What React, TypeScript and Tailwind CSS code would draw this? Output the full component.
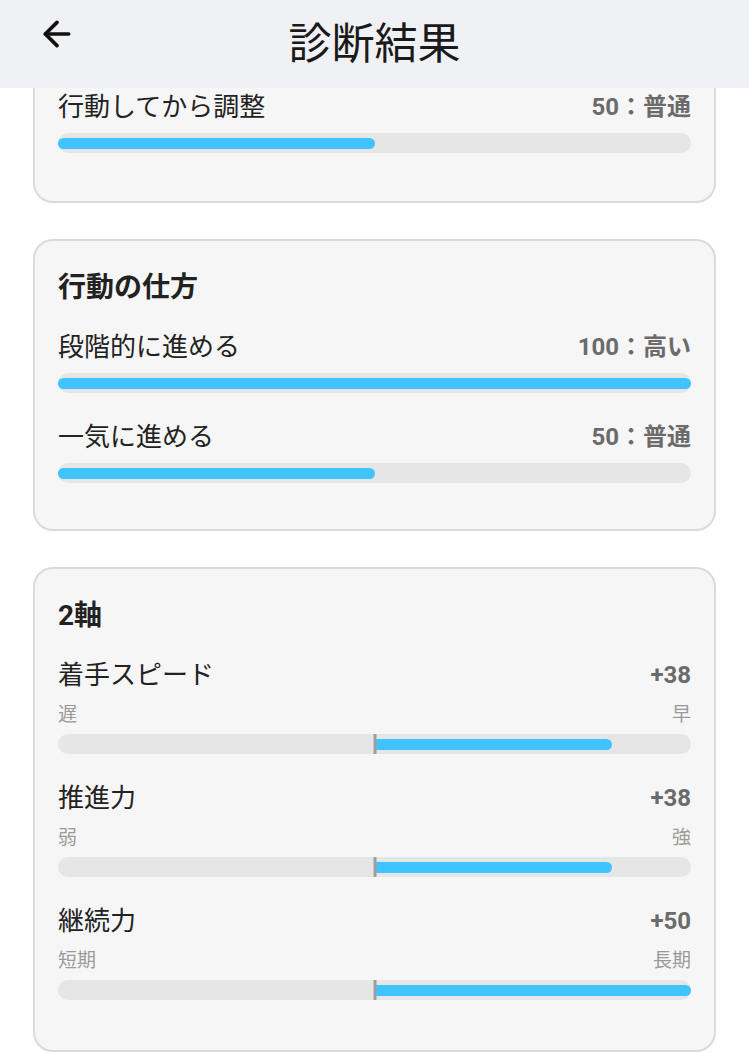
import { ArrowLeft } from "lucide-react";

type Level = { label: string; score: number; verdict: string };
type Axis = { label: string; value: number; fill: number; low: string; high: string };

const FONT = "font-['Roboto','Noto_Sans_CJK_JP',sans-serif]";

function LevelRow({ item }: { item: Level }) {
  return (
    <div>
      <div className="flex h-9 items-center justify-between">
        <span className="text-[26px] text-[#222]">{item.label}</span>
        <span className="text-[24px] font-bold text-[#6b6b6b]">
          {item.score}：{item.verdict}
        </span>
      </div>
      <div className="mt-2 flex h-5 items-center rounded-full bg-[#e6e6e6]">
        <div
          className="h-[11px] rounded-full bg-[#40c4ff]"
          style={{ width: `${item.score === 100 ? 100 : 50}%` }}
        />
      </div>
    </div>
  );
}

function AxisRow({ item }: { item: Axis }) {
  // fill is the share of the right half, 0..1
  return (
    <div>
      <div className="flex h-9 items-center justify-between">
        <span className="text-[26px] text-[#222]">{item.label}</span>
        <span className="text-[24px] font-bold text-[#6b6b6b]">
          {item.value > 0 ? `+${item.value}` : item.value}
        </span>
      </div>
      <div className="mt-2 flex h-7 items-center justify-between text-[19px] text-[#9a9a9a]">
        <span>{item.low}</span>
        <span>{item.high}</span>
      </div>
      <div className="relative mt-[5px] flex h-5 items-center rounded-full bg-[#e6e6e6]">
        <div
          className="absolute left-1/2 h-[11px] rounded-r-full bg-[#40c4ff]"
          style={{ width: `${item.fill * 50}%` }}
        />
        <div className="absolute left-1/2 top-0 h-5 w-[3px] -translate-x-1/2 bg-[#9e9e9e]" />
      </div>
    </div>
  );
}

const method: Level[] = [
  { label: "段階的に進める", score: 100, verdict: "高い" },
  { label: "一気に進める", score: 50, verdict: "普通" },
];

const axes: Axis[] = [
  { label: "着手スピード", value: 38, fill: 0.75, low: "遅", high: "早" },
  { label: "推進力", value: 38, fill: 0.75, low: "弱", high: "強" },
  { label: "継続力", value: 50, fill: 1, low: "短期", high: "長期" },
];

export default function App() {
  return (
    <div className={`${FONT} flex h-[1053px] flex-col overflow-hidden bg-white`}>
      <header className="relative flex h-[88px] shrink-0 items-center justify-center bg-[#f0f1f4]">
        <button type="button" className="absolute left-[37px] top-[14px] text-[#111]" aria-label="戻る">
          <ArrowLeft className="h-[40px] w-[40px]" strokeWidth={2.2} />
        </button>
        <h1 className="text-[43px] font-normal text-[#1a1a1a]">診断結果</h1>
      </header>

      <main className="flex flex-col gap-[36px] px-[33px]">
        <section className="rounded-b-[20px] border-x-2 border-b-2 border-[#dadada] bg-[#f6f6f6] px-[23px] pb-[48px] pt-px">
          <LevelRow item={{ label: "行動してから調整", score: 50, verdict: "普通" }} />
        </section>

        <section className="rounded-[20px] border-2 border-[#dadada] bg-[#f6f6f6] px-[23px] pb-[46px] pt-[29px]">
          <h2 className="flex h-9 items-center text-[28px] font-bold text-[#222]">行動の仕方</h2>
          <div className="mt-[23px] flex flex-col gap-[26px]">
            {method.map((m) => (
              <LevelRow key={m.label} item={m} />
            ))}
          </div>
        </section>

        <section className="rounded-[20px] border-2 border-[#dadada] bg-[#f6f6f6] px-[23px] pb-[50px] pt-[29px]">
          <h2 className="flex h-9 items-center text-[28px] font-bold text-[#222]">2軸</h2>
          <div className="mt-[23px] flex flex-col gap-[26px]">
            {axes.map((a) => (
              <AxisRow key={a.label} item={a} />
            ))}
          </div>
        </section>
      </main>
    </div>
  );
}
